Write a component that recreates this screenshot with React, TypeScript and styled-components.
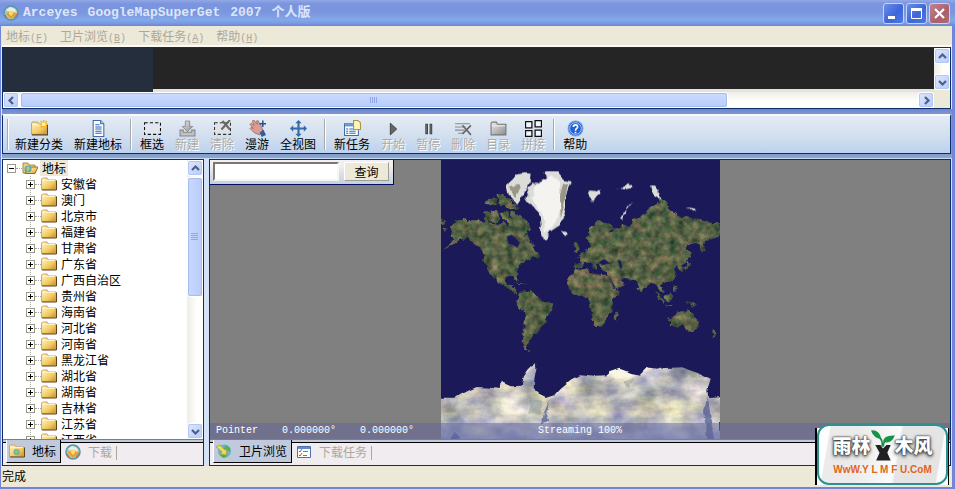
import React, { useState } from 'react';
import styled, { createGlobalStyle, css } from 'styled-components';

const GlobalStyle = createGlobalStyle`
  *, *::before, *::after { box-sizing: border-box; }
  body { margin: 0; overflow: hidden; }
  button, input { font: inherit; margin: 0; }
  svg { display: block; flex: none; }
`;

const NAVY = '#0b2f6c';
const BEIGE = '#ece9d8';
const MUTED = '#aca899';

/* ---------- window frame ---------- */

const Window = styled.div`
  display: flex;
  flex-direction: column;
  height: 100vh;
  background: #7385d8;
  font: 12px/16px 'Noto Sans CJK SC', sans-serif;
  color: #000;
`;

const TitleBar = styled.header`
  display: flex;
  align-items: center;
  flex: none;
  height: 26px;
  padding: 0 5px 0 3px;
  background: linear-gradient(#92a8e6 0, #7a94dd 4px, #7b95de 12px, #83a7e9 20px, #7b9ce4 23px, #6c84d0 26px);
`;

const Title = styled.h1`
  display: flex;
  flex: 1;
  gap: 10px;
  margin: 0 0 0 4px;
  color: #dbe6fb;
  font: bold 13px/20px 'Liberation Mono', 'Noto Sans CJK SC', monospace;
`;

const WindowButtons = styled.div`
  display: flex;
  gap: 2px;
`;

const WindowButton = styled.button<{ $danger?: boolean }>`
  display: grid;
  place-items: center;
  width: 21px;
  height: 21px;
  padding: 0;
  border: 1px solid #c3d3f6;
  border-radius: 3px;
  background: ${p => (p.$danger
    ? 'linear-gradient(135deg, #c08392, #a9616c 60%, #b06c70)'
    : 'linear-gradient(135deg, #6c8fe8, #3e66d8 55%, #4a7ae6)')};
`;

const Client = styled.div`
  display: flex;
  flex-direction: column;
  flex: 1;
  min-height: 0;
  margin: 0 3px 2px 1px;
  border-left: 1px solid #dce8fa;
  background: ${BEIGE};
`;

const MenuBar = styled.nav`
  display: flex;
  flex: none;
  gap: 12px;
  height: 21px;
  padding: 0 4px;
  border-bottom: 2px solid #fbfaf6;
`;

const MenuItem = styled.button`
  padding: 0;
  border: 0;
  background: none;
  color: ${MUTED};
  white-space: nowrap;
`;

const Shortcut = styled.span`
  font: 10px 'Liberation Mono', monospace;
`;

/* ---------- scroll bars ---------- */

const ScrollButton = styled.button`
  display: grid;
  place-items: center;
  flex: none;
  width: 16px;
  height: 16px;
  padding: 0;
  border: 1px solid #fff;
  border-radius: 3px;
  outline: 1px solid #b4c8f6;
  outline-offset: -2px;
  background: linear-gradient(135deg, #dce6ff, #b8cbfa);
`;

const VerticalBar = styled.div`
  display: flex;
  flex: none;
  flex-direction: column;
  justify-content: space-between;
  width: 16px;
  background: linear-gradient(90deg, #eeede8, #fefefb 60%);
`;

const HorizontalBar = styled.div`
  display: flex;
  flex: none;
  height: 16px;
  background: linear-gradient(#eeede8, #fefefb 60%);
`;

const Thumb = styled.div<{ $vertical?: boolean }>`
  display: flex;
  align-items: center;
  justify-content: center;
  border: 1px solid #fff;
  border-radius: 3px;
  outline: 1px solid #a6bcf0;
  outline-offset: -2px;
  ${p => (p.$vertical
    ? css`flex: 0 0 43%; margin: 1px 0 auto; background: linear-gradient(90deg, #c9d8ff, #b9cbf9);`
    : css`flex: 0 0 76%; margin: 0 auto 0 1px; background: linear-gradient(#cbdaff, #b9cdfb);`)}
`;

const BarSpace = styled.span`
  height: 10px;
`;

/* ---------- banner strip ---------- */

const Banner = styled.section`
  display: flex;
  flex: none;
  height: 62px;
  margin-right: 1px;
  border: 1px solid ${NAVY};
  background: ${BEIGE};
`;

const BannerMain = styled.div`
  display: flex;
  flex: 1;
  flex-direction: column;
  min-width: 0;
`;

const BannerCanvas = styled.div`
  display: flex;
  flex: 1;
  border-bottom: 3px solid #e3e2e0;
  background: #252525;
`;

const BannerBlock = styled.div`
  width: 150px;
  margin-bottom: -3px;
  background: #242e3c;
`;

/* ---------- tool bar ---------- */

const ToolArea = styled.div`
  flex: none;
  padding: 5px 1px 4px 0;
  background: linear-gradient(#6b83d4, #8398cc 5px, #7f98c8 44px, #90a8d0);
`;

const ToolBar = styled.div`
  display: flex;
  align-items: center;
  gap: 1px;
  height: 40px;
  padding: 0 4px;
  border: 1px solid ${NAVY};
  border-top: 2px solid #f5f8fc;
  background: linear-gradient(#e4ebf4, #d4e0ef 50%, #bdd2ee);
`;

const Divider = styled.span`
  width: 2px;
  height: 31px;
  margin: 0 2px;
  border-left: 1px solid #a7aaa8;
  border-right: 1px solid #fff;
`;

const Grip = styled(Divider)`
  margin: 0;
`;

const ToolButton = styled.button`
  display: flex;
  flex-direction: column;
  align-items: center;
  padding: 0 5px;
  border: 0;
  background: none;
  color: #000;
  line-height: 13px;
  white-space: nowrap;
  &:disabled {
    color: #aeaca4;
    text-shadow: 1px 1px #fff;
  }
`;

/* ---------- work area ---------- */

const WorkArea = styled.main`
  display: flex;
  flex: 1;
  gap: 5px;
  min-height: 0;
  padding-right: 1px;
  border-top: 1px solid #c6dbf6;
  background: #d4e2f7;
`;

const Pane = styled.section<{ $side?: boolean }>`
  display: flex;
  flex-direction: column;
  min-width: 0;
  border: 1px solid ${NAVY};
  background: #f0ecf0;
  ${p => (p.$side ? css`flex: 0 0 202px;` : css`flex: 1;`)}
`;

const TreeArea = styled.div`
  display: flex;
  flex: 1;
  min-height: 0;
  background: #fff;
`;

const Tree = styled.ul`
  flex: 1;
  margin: 0;
  padding: 0 0 0 4px;
  overflow: hidden;
  list-style: none;
`;

const Branch = styled.ul`
  margin: 0 0 0 19px;
  padding: 0;
  list-style: none;
  background: repeating-linear-gradient(#aaa89c 0 1px, transparent 1px 2px) 4px 0 / 1px 100% no-repeat;
`;

const TreeRow = styled.div`
  display: flex;
  align-items: center;
  height: 16px;
`;

const Expander = styled.button`
  display: grid;
  place-items: center;
  width: 9px;
  height: 9px;
  padding: 0;
  border: 1px solid #9b998c;
  background: #fff;
`;

const Dots = styled.span`
  width: 6px;
  border-top: 1px dotted #a7a59a;
`;

const NodeLabel = styled.span<{ $selected?: boolean }>`
  margin-left: 2px;
  padding: 0 2px;
  background: ${p => (p.$selected ? BEIGE : 'transparent')};
`;

/* ---------- tabs ---------- */

const Tabs = styled.div`
  display: flex;
  flex: none;
  align-items: flex-start;
  height: 26px;
  padding-left: 3px;
  border-top: 1px solid #7d7f82;
  background: linear-gradient(#bfcadd 2px, #000 2px 3px, #f0ecf0 3px);
`;

const Tab = styled.button<{ $active?: boolean }>`
  display: flex;
  align-items: center;
  gap: 7px;
  height: 23px;
  padding: 0 4px;
  border: 0;
  background: none;
  color: ${MUTED};
  white-space: nowrap;
  ${p => p.$active && css`
    padding: 0 4px 0 2px;
    border: solid;
    border-width: 0 1px 1px;
    border-color: #000 #000 #000 #fff;
    background: #c0cadc;
    color: #000;
  `}
`;

const TabEnd = styled.span`
  height: 14px;
  margin-top: 6px;
  border-left: 1px solid ${MUTED};
`;

/* ---------- map view ---------- */

const MapView = styled.div`
  position: relative;
  display: flex;
  flex: 1;
  justify-content: center;
  min-height: 0;
  background: #808080;
`;

const SearchPanel = styled.form`
  position: absolute;
  top: 0;
  left: 0;
  display: flex;
  gap: 5px;
  padding: 2px 4px 3px 3px;
  border: solid #000e62;
  border-width: 0 1px 1px 0;
  background: linear-gradient(#f2eef2 0 6px, #e0e2ec 12px, #c6d0e2);
`;

const SearchInput = styled.input`
  width: 126px;
  height: 19px;
  padding: 0 3px;
  border: 2px solid;
  border-color: #79776f #f6f5ee #f6f5ee #79776f;
  background: #fff;
`;

const SearchButton = styled.button`
  width: 45px;
  height: 19px;
  padding: 0;
  border: 1px solid;
  border-color: #fff #a09e92 #a09e92 #fff;
  background: ${BEIGE};
  line-height: 16px;
`;

const MapStatus = styled.div`
  position: absolute;
  right: 0;
  bottom: 0;
  left: 0;
  display: grid;
  grid-template-columns: 1fr auto 1fr;
  height: 16px;
  padding: 0 6px;
  background: rgba(98, 98, 156, 0.5);
  color: #fff;
  font: 10px/16px 'Liberation Mono', monospace;
`;

const Readout = styled.div`
  display: flex;
  gap: 24px;
`;

const StatusBar = styled.footer`
  flex: none;
  height: 21px;
  padding: 2px 0;
  background: ${BEIGE};
`;

/* ---------- site badge ---------- */

const Badge = styled.aside`
  position: absolute;
  right: 7px;
  bottom: 4px;
  width: 131px;
  height: 61px;
  overflow: hidden;
  border: 2px solid #2c9090;
  border-radius: 12px;
  background: linear-gradient(100deg, #fff 8%, #ebebeb 9% 30%, #fbfbfb 60%, #e4e4e4 62% 92%, #fbfbfb 93%);
`;

const BadgeBacking = styled.div`
  position: absolute;
  right: 6px;
  bottom: 4px;
  width: 134px;
  height: 57px;
  border: solid #000;
  border-width: 0 1px 0 2px;
  background: #fff;
`;

const BadgeName = styled.div`
  display: flex;
  align-items: center;
  justify-content: center;
  height: 38px;
  color: #fff;
  font: 900 19px/38px 'Noto Sans CJK SC', sans-serif;
  text-shadow: 0 0 1px #333, 0 0 2px #333, 0 1px 3px #444, 0 2px 4px #777;
`;

const BadgeUrl = styled.a`
  display: block;
  color: #e0651c;
  font: bold 10px/12px 'Liberation Sans', sans-serif;
  text-align: center;
  text-decoration: none;
  white-space: pre;
`;

/* ---------- icons ---------- */

type IconName = 'folderNew' | 'page' | 'select' | 'import' | 'clear' | 'pan' | 'extent' | 'task'
  | 'play' | 'pause' | 'remove' | 'folderGray' | 'stitch' | 'help' | 'folder' | 'folderOpen'
  | 'folderEarth' | 'earth' | 'globe' | 'list';

const folderShape = (
  <>
    <path d="M.5 13.500V3l1-1H6l1.500 2H15v9.500z" fill="url(#gold)" stroke="#c9a868" />
    <path d="M1 4.500h13" stroke="#fff3c4" />
    <path d="M1 14h14.500V4.500" fill="none" stroke="#5c451c" />
  </>
);

const drawings: Record<IconName, React.ReactNode> = {
  folder: folderShape,
  folderNew: (
    <>
      {folderShape}
      <path d="M12 0v8M8 4h8M9 1l6 6M15 1L9 7" stroke="#f5b51d" strokeWidth="1.400" />
      <circle cx="12" cy="4" r="1.800" fill="#fff7a0" />
    </>
  ),
  folderEarth: (
    <>
      {folderShape}
      <circle cx="7.500" cy="9" r="3" fill="#5fa7b0" />
      <path d="M5 8l3-2 2 3-3 3z" fill="#8fc274" />
    </>
  ),
  folderOpen: (
    <>
      <path d="M1 13V3h5l1 2h6v8z" fill="#e8cf8b" stroke="#a98a4a" />
      <path d="M3 13.500L5 7h11l-3 6.500z" fill="url(#gold)" stroke="#8e6e2c" />
      <circle cx="6" cy="9" r="3.500" fill="#5fa7b0" />
      <path d="M4 8l2-2 2 2-2 4z" fill="#a7cf74" />
    </>
  ),
  folderGray: (
    <>
      <path d="M1 14V3l1-1h4l1 2h8v10z" fill="url(#silver)" stroke="#777" />
      <path d="M2 5.500h12" stroke="#eee" />
    </>
  ),
  page: (
    <>
      <path d="M3 .5h7l3 3v12H3z" fill="#fff" stroke="#426aa8" />
      <path d="M10 .5v3h3" fill="#b8d0f2" stroke="#426aa8" />
      <path d="M5 4.500h4M5 6.500h6M5 8.500h6M5 10.500h6M5 12.500h6" stroke="#2462b8" />
    </>
  ),
  select: <path d="M.5 2.500h15v11H.5z" fill="#e1e7ee" stroke="#111" strokeDasharray="3 2" />,
  import: (
    <>
      <path d="M1 9.500h3v2h8v-2h3V15H1z" fill="#c2c2c2" stroke="#858585" />
      <path d="M6 1h4v5h3l-5 5-5-5h3z" fill="url(#silver)" stroke="#858585" strokeWidth=".8" />
    </>
  ),
  clear: (
    <>
      <path d="M.5 2.500h15v11H.5z" fill="#dfe3e8" stroke="#333" strokeDasharray="3 2" />
      <path d="M8 1l7 8M15 0L7 9" stroke="#6a6a6a" strokeWidth="2" />
    </>
  ),
  pan: (
    <>
      <path d="M1 4l1-1 3 2-2-4 1.500-1L8 4 7 1l1.500-.5L12 7l1 3-3 4-5-2-4-4 1-1 2 1z" fill="#dc9c92" stroke="#9f6963" strokeWidth=".8" />
      <path d="M10 12l3.500-3 2.500 5-4 2z" fill="#335e9d" />
      <path d="M13 .5v6M10 3.500h6" stroke="#214f94" strokeWidth="1.400" />
    </>
  ),
  extent: (
    <path d="M8 0l3 3H9v4h4V5l3 3-3 3V9H9v4h2l-3 3-3-3h2V9H3v2L0 8l3-3v2h4V3H5z" fill="#3569a7" />
  ),
  task: (
    <>
      <path d="M.5 3.500h13v11H.5z" fill="#fff" stroke="#3f6da5" />
      <path d="M1 5h12" stroke="#5c90d0" strokeWidth="2" />
      <path d="M2 8.500h2M5 8.500h6M2 10.500h2M5 10.500h6M2 12.500h2M5 12.500h6" stroke="#316abb" />
      <path d="M9 .5h4l2.500 2V9H9z" fill="#fff5b5" stroke="#aa954a" />
    </>
  ),
  play: <path d="M5 3v11l6-5.500z" fill="#666" stroke="#333" strokeWidth=".8" />,
  pause: <path d="M5.500 4v9H7V4zM9.500 4v9H11V4z" fill="#888" stroke="#444" />,
  remove: (
    <>
      <path d="M0 3.500h14M0 6.500h10M0 9.500h9M3 12.500h5" stroke="#8b8b8b" />
      <path d="M7 5l8 9M15 5l-8 8" stroke="#666" strokeWidth="1.500" />
    </>
  ),
  stitch: (
    <path d="M.5 1.500h6v6h-6zM9.500.5h6v6h-6zM.5 10h6v5.500h-6zM9.500 9.500h6v6h-6z" fill="#f3f6fa" stroke="#111" strokeWidth="1.200" />
  ),
  help: (
    <>
      <circle cx="8" cy="8" r="7" fill="#2561cf" stroke="#7ba3e5" />
      <circle cx="8" cy="8" r="5.500" fill="none" stroke="#d5e4ff" strokeWidth=".7" />
      <path d="M6 6.500C6 4 10 4 10 6.500 10 8 8 8 8 10M8 11v1.500" fill="none" stroke="#fff" strokeWidth="1.500" />
    </>
  ),
  globe: (
    <>
      <circle cx="8" cy="8" r="7" fill="#a4cfa4" stroke="#5b93b0" strokeWidth="1.500" />
      <path d="M3 5l4-3 5 2 1 3-5 1z" fill="#e6efe6" />
      <path d="M2.500 8h3V6.500h5V8h3L8 14z" fill="#f09a22" />
      <path d="M6 6.500h4V9L8 11 6 9z" fill="#ffd96b" />
      <path d="M11 13l3-4M2 10l2 3" stroke="#d84f22" />
    </>
  ),
  earth: (
    <>
      <circle cx="8.500" cy="8" r="7" fill="#6bb0cc" stroke="#b5d3d6" />
      <path d="M9 2l5 3v4l-3-2-3 1zM5 9l5 1 1 4-4 1-3-3z" fill="#5dab4d" />
      <path d="M0 4l4-2 5 5 2-1-1 6-6-1 2-2z" fill="#e9d85e" stroke="#9c9c39" strokeWidth=".7" />
    </>
  ),
  list: (
    <>
      <path d="M1.500 2.500h13v11h-13z" fill="#fff" stroke="#4d72ab" />
      <path d="M2 4h12" stroke="#5e8fd6" strokeWidth="2" />
      <path d="M3 7l1 1 2-3M3 11l1 1 2-3" fill="none" stroke="#c64b34" />
      <path d="M7 7.500h5M7 11.500h4" stroke="#5d7fae" />
    </>
  ),
};

const Icon = ({ name, size = 16 }: { name: IconName; size?: number }) => (
  <svg width={size} height={size} viewBox="0 0 16 16" aria-hidden="true">{drawings[name]}</svg>
);

const Gradients = () => (
  <svg width="0" height="0" aria-hidden="true">
    <defs>
      <linearGradient id="gold" x1="0" y1="0" x2="1" y2="1">
        <stop offset="0" stopColor="#fff6c5" /><stop offset=".6" stopColor="#f3ca62" /><stop offset="1" stopColor="#c98b25" />
      </linearGradient>
      <linearGradient id="silver" x1="0" y1="0" x2="1" y2="1">
        <stop offset="0" stopColor="#ececec" /><stop offset="1" stopColor="#8b8b8b" />
      </linearGradient>
    </defs>
  </svg>
);

const arrows = { up: 'M1 6l3.500-3.500L8 6', down: 'M1 3l3.500 3.500L8 3', left: 'M6 1L2.500 4.500 6 8', right: 'M3 1l3.500 3.500L3 8' };

const Arrow = ({ to }: { to: keyof typeof arrows }) => (
  <ScrollButton type="button" aria-label={to}>
    <svg width="9" height="9" viewBox="0 0 9 9"><path d={arrows[to]} fill="none" stroke="#4d6185" strokeWidth="2.200" /></svg>
  </ScrollButton>
);

const ThumbGrip = ({ vertical }: { vertical?: boolean }) => (
  <svg width="8" height="8" viewBox="0 0 8 8">
    <path d={vertical ? 'M0 .5h7M0 2.500h7M0 4.500h7M0 6.500h7' : 'M.5 1v6M2.500 1v6M4.500 1v6M6.500 1v6'} stroke="#8fa9e8" />
  </svg>
);

/* ---------- world map ---------- */

const land = [
  'M30 208L50 187 70 185 90 190 132 190 150 196 175 200 190 193 205 203 212 160 225 165 245 175 262 190 275 215 262 218 255 235 265 240 275 255 285 270 298 290 290 300 275 295 265 308 250 312 240 325 227 338 230 352 236 370 230 370 220 355 205 353 196 360 196 372 203 382 214 380 220 373 218 388 230 393 234 404 225 402 200 390 182 380 170 362 158 348 165 365 150 345 138 328 130 310 132 290 120 270 100 250 80 240 62 245 45 258 20 270 5 277 28 262 42 248 32 235 38 222z',
  'M132 160L155 158 178 160 180 180 170 196 150 190 135 190zM135 135L148 122 165 120 168 140 150 145zM170 115L185 105 200 118 218 130 236 150 215 155 200 140 178 142zM182 165L200 160 210 190 190 190zM215 165L240 170 258 190 274 215 262 215 240 200 225 190z',
  'M238 402L262 399 275 405 290 410 300 425 320 431 338 440 336 455 325 470 318 490 302 505 292 520 280 530 272 545 262 560 262 572 268 580 255 578 247 562 250 535 255 510 258 480 250 462 238 447 232 430 238 415z',
  'M437 240L445 225 458 205 470 192 485 187 498 193 515 200 520 210 505 220 515 225 520 208 535 208 552 200 570 203 578 195 580 178 590 175 600 180 615 165 628 150 650 138 658 125 680 135 685 155 705 160 720 175 755 180 790 185 815 195 838 195 838 238 815 242 795 250 790 265 795 278 785 280 778 260 765 255 745 260 738 275 755 282 750 300 738 315 725 322 728 335 720 335 712 322 700 330 708 350 700 365 680 375 668 375 665 385 673 398 665 405 655 390 645 380 635 372 625 378 612 395 606 408 598 395 590 375 575 365 555 363 540 358 550 370 555 375 530 395 520 392 508 365 504 350 505 340 485 335 478 325 475 315 468 318 472 335 462 330 448 315 435 315 425 330 405 332 400 325 403 312 420 312 420 300 412 294 430 285 440 278 450 268 447 258z',
  'M403 255L412 258 422 280 410 286 400 285 405 275zM465 250L478 218 490 215 485 238 475 255z',
  'M408 337L445 332 452 345 475 350 500 350 512 380 522 395 538 398 530 415 518 430 514 445 515 458 505 475 498 492 485 505 468 508 460 490 452 470 452 450 445 435 445 418 430 410 410 412 395 408 383 393 381 375 390 355z',
  'M535 458L536 470 528 487 521 484 523 468z',
  'M685 480L700 473 713 462 728 458 735 465 742 452 750 460 758 465 765 478 776 490 775 505 765 520 755 522 740 512 725 502 705 508 690 508 690 495z',
  'M645 402L655 410 675 430 670 434 655 422zM676 415L692 403 695 412 690 430 680 428zM735 430L750 432 768 446 750 444zM700 376L708 385 710 400 703 396zM672 436L700 442 698 446 673 440zM745 305L750 318 740 330 725 336 740 322zM222 375L245 378 262 381 242 375zM820 515L832 520 818 542 810 543 822 530zM3 185L15 190 12 202 3 195zM8 210L20 215 12 222z',
];

const ice = [
  'M278 68L300 72 315 60 310 48 330 40 355 40 368 55 372 70 392 72 385 95 378 120 378 150 370 185 358 200 335 215 325 230 318 245 308 238 303 215 300 185 295 165 280 145 265 135 256 122 262 105 268 85z',
  'M198 90L210 68 232 50 255 45 275 52 272 68 262 82 262 95 250 108 242 130 228 140 215 120 203 110z',
  'M445 98L462 102 478 92 482 105 470 122 460 132 452 118zM366 218L384 218 386 226 375 231zM528 88L548 90 565 78 572 90 555 95zM580 137L560 148 552 165 550 185 543 180 548 160 562 142zM633 82L645 88 660 110 665 122 655 118 640 108zM740 145L770 152 755 155z',
];

const antarctica = 'M0 722L40 722 60 708 85 695 110 684 150 686 182 690 185 668 215 682 245 680 252 655 265 635 285 615 286 635 280 665 278 690 300 710 320 720 345 712 365 690 395 665 420 652 460 656 500 655 515 642 545 632 580 645 600 650 620 630 650 635 675 630 720 628 770 645 790 655 812 665 802 700 805 720 840 718 840 850 0 850z';

const WorldMap = () => (
  <svg width="279" height="279" viewBox="3 6 837 837" role="img" aria-label="World map">
    <defs>
      <filter id="terrain" x="0" y="0" width="100%" height="100%" colorInterpolationFilters="sRGB">
        <feTurbulence type="fractalNoise" baseFrequency=".045" numOctaves="5" seed="8" result="n" />
        <feDisplacementMap in="SourceGraphic" in2="n" scale="20" xChannelSelector="R" yChannelSelector="G" result="shape" />
        <feColorMatrix in="n" values=".9 .2 0 0 -.18  .5 .4 0 0 -.06  .4 .2 .1 0 -.08  0 0 0 0 1" result="color" />
        <feComposite in="color" in2="shape" operator="in" result="textured" />
        <feComposite in="textured" in2="shape" operator="arithmetic" k2=".6" k3=".4" />
      </filter>
      <filter id="snow" x="0" y="0" width="100%" height="100%" colorInterpolationFilters="sRGB">
        <feTurbulence type="fractalNoise" baseFrequency=".03" numOctaves="4" seed="5" result="n" />
        <feDisplacementMap in="SourceGraphic" in2="n" scale="22" xChannelSelector="R" yChannelSelector="G" />
      </filter>
      <filter id="plateau" x="0" y="0" width="100%" height="100%" colorInterpolationFilters="sRGB">
        <feTurbulence type="fractalNoise" baseFrequency=".012 .018" numOctaves="5" seed="12" result="n" />
        <feDisplacementMap in="SourceGraphic" in2="n" scale="18" xChannelSelector="R" yChannelSelector="G" result="shape" />
        <feColorMatrix in="n" values="1.100 0 0 0 .18  1 .1 0 0 .17  .6 0 .4 0 .2  0 0 0 0 1" result="color" />
        <feComposite in="color" in2="shape" operator="in" result="textured" />
        <feComposite in="textured" in2="shape" operator="arithmetic" k2=".75" k3=".25" />
      </filter>
      <linearGradient id="shelf" x1="0" y1="0" x2="0" y2="1">
        <stop offset=".4" stopColor="#8ba2cc" stopOpacity="0" /><stop offset="1" stopColor="#8298cc" stopOpacity=".6" />
      </linearGradient>
    </defs>
    <rect width="850" height="850" fill="#1b1958" />
    <g filter="url(#terrain)">
      {land.map(d => <path key={d} d={d} fill="#4b6044" />)}
      <g fill="#917c60" opacity=".85">
        <path d="M388 355L410 340 450 343 505 355 520 388 490 390 440 388 385 388zM510 345L535 345 552 372 530 390 515 370z" />
        <path d="M560 310L610 300 690 295 700 315 650 330 600 328 545 325z" opacity=".7" />
        <path d="M140 310L165 310 185 350 180 372 150 340zM255 480L265 520 255 570 248 550zM455 470L490 475 485 500 465 500zM695 480L745 475 760 495 720 498z" opacity=".7" />
      </g>
    </g>
    <path d="M200 235L215 230 225 238 240 255 232 270 222 262 206 258zM475 313L492 303 512 316 488 321zM533 304L542 308 547 330 540 332zM505 354L527 388 521 390z" fill="#1b1958" />
    <g filter="url(#snow)">
      {ice.map(d => <path key={d} d={d} fill="#dcdcd8" />)}
      <path d="M285 82L330 55 360 70 360 150 345 195 318 225 308 165 272 120z" fill="#f4f3ef" />
      <path d="M370 80L385 78 372 145 362 180 360 110zM210 90L235 75 240 95 225 118zM280 68L300 75 290 80z" fill="#77705e" opacity=".65" />
    </g>
    <g filter="url(#plateau)"><path d={antarctica} fill="#dedad4" /></g>
    <path d="M0 735L300 715 350 725 800 720 840 725V850H0z" fill="url(#shelf)" />
    <g filter="url(#snow)">
      <path d="M803 715L812 780 822 850 798 850 800 800 792 760zM330 722L318 770 325 790 305 800 312 760zM45 820L65 840 30 848z" fill="#3c4a8c" opacity=".6" />
      <path d="M270 720L310 725 300 770 265 765zM550 670L590 660 570 690z" fill="#87949c" opacity=".5" />
    </g>
  </svg>
);

/* ---------- content ---------- */

type Tool = { label: string; icon: IconName; disabled?: boolean };

const toolGroups: Tool[][] = [
  [{ label: '新建分类', icon: 'folderNew' }, { label: '新建地标', icon: 'page' }],
  [
    { label: '框选', icon: 'select' },
    { label: '新建', icon: 'import', disabled: true },
    { label: '清除', icon: 'clear', disabled: true },
    { label: '漫游', icon: 'pan' },
    { label: '全视图', icon: 'extent' },
  ],
  [
    { label: '新任务', icon: 'task' },
    { label: '开始', icon: 'play', disabled: true },
    { label: '暂停', icon: 'pause', disabled: true },
    { label: '删除', icon: 'remove', disabled: true },
    { label: '目录', icon: 'folderGray', disabled: true },
    { label: '拼接', icon: 'stitch', disabled: true },
  ],
  [{ label: '帮助', icon: 'help' }],
];

const menus = [['地标', 'F'], ['卫片浏览', 'B'], ['下载任务', 'A'], ['帮助', 'H']];

const provinces = ['安徽省', '澳门', '北京市', '福建省', '甘肃省', '广东省', '广西自治区', '贵州省', '海南省',
  '河北省', '河南省', '黑龙江省', '湖北省', '湖南省', '吉林省', '江苏省', '江西省'];

const Sign = ({ plus }: { plus?: boolean }) => (
  <svg width="7" height="7" viewBox="0 0 7 7"><path d={plus ? 'M1 3.500h5M3.500 1v5' : 'M1 3.500h5'} stroke="#000" /></svg>
);

export default function App() {
  const [query, setQuery] = useState('');
  return (
    <Window>
      <GlobalStyle />
      <TitleBar>
        <Gradients />
        <Icon name="globe" />
        <Title><span>Arceyes</span><span>GoogleMapSuperGet</span><span>2007</span><span>个人版</span></Title>
        <WindowButtons>
          <WindowButton aria-label="Minimize"><svg width="15" height="15"><path d="M2 11.500h7" stroke="#fff" strokeWidth="3" /></svg></WindowButton>
          <WindowButton aria-label="Maximize"><svg width="15" height="15"><path d="M2.500 3v9.500h10V3M2 3.500h11" fill="none" stroke="#fff" /><path d="M2 3.500h11" stroke="#fff" strokeWidth="3" /></svg></WindowButton>
          <WindowButton $danger aria-label="Close"><svg width="15" height="15"><path d="M3 3l9 9M12 3l-9 9" stroke="#fff" strokeWidth="2.200" /></svg></WindowButton>
        </WindowButtons>
      </TitleBar>
      <Client>
        <MenuBar>
          {menus.map(([label, key]) => (
            <MenuItem key={key}>{label}<Shortcut>(<u>{key}</u>)</Shortcut></MenuItem>
          ))}
        </MenuBar>
        <Banner>
          <BannerMain>
            <BannerCanvas><BannerBlock /></BannerCanvas>
            <HorizontalBar><Arrow to="left" /><Thumb><ThumbGrip /></Thumb><Arrow to="right" /></HorizontalBar>
          </BannerMain>
          <div>
            <VerticalBar><Arrow to="up" /><BarSpace /><Arrow to="down" /></VerticalBar>
          </div>
        </Banner>
        <ToolArea>
          <ToolBar role="toolbar">
            <Grip />
            {toolGroups.map((group, index) => (
              <React.Fragment key={group[0].label}>
                {index > 0 && <Divider />}
                {group.map(tool => (
                  <ToolButton key={tool.label} disabled={tool.disabled}>
                    <Icon name={tool.icon} size={17} />
                    {tool.label}
                  </ToolButton>
                ))}
              </React.Fragment>
            ))}
          </ToolBar>
        </ToolArea>
        <WorkArea>
          <Pane $side>
            <TreeArea>
              <Tree>
                <li>
                  <TreeRow>
                    <Expander aria-label="收起"><Sign /></Expander><Dots />
                    <Icon name="folderOpen" />
                    <NodeLabel $selected>地标</NodeLabel>
                  </TreeRow>
                  <Branch>
                    {provinces.map(name => (
                      <li key={name}>
                        <TreeRow>
                          <Expander aria-label="展开"><Sign plus /></Expander><Dots />
                          <Icon name="folder" />
                          <NodeLabel>{name}</NodeLabel>
                        </TreeRow>
                      </li>
                    ))}
                  </Branch>
                </li>
              </Tree>
              <VerticalBar><Arrow to="up" /><Thumb $vertical><ThumbGrip vertical /></Thumb><Arrow to="down" /></VerticalBar>
            </TreeArea>
            <Tabs>
              <Tab $active><Icon name="folderEarth" />地标</Tab>
              <Tab><Icon name="globe" />下载</Tab>
              <TabEnd />
            </Tabs>
          </Pane>
          <Pane>
            <MapView>
              <WorldMap />
              <SearchPanel onSubmit={event => event.preventDefault()}>
                <SearchInput aria-label="查询" value={query} onChange={event => setQuery(event.target.value)} />
                <SearchButton type="submit">查询</SearchButton>
              </SearchPanel>
              <MapStatus>
                <Readout><span>Pointer</span><span>0.000000°</span><span>0.000000°</span></Readout>
                <span>Streaming 100%</span>
              </MapStatus>
            </MapView>
            <Tabs>
              <Tab $active><Icon name="earth" />卫片浏览</Tab>
              <Tab><Icon name="list" />下载任务</Tab>
              <TabEnd />
            </Tabs>
          </Pane>
        </WorkArea>
        <StatusBar>完成</StatusBar>
      </Client>
      <BadgeBacking />
      <Badge>
        <BadgeName>
          <span>雨林</span>
          <svg width="24" height="38" viewBox="0 0 28 38">
            <path d="M5 19h6l3 4 4-4h5l-4 9 4 9H6l4-9z" fill="#222" />
            <path d="M13 21Q14 14 10 10M14 21Q15 14 19 11" fill="none" stroke="#188a49" strokeWidth="2" />
            <path d="M0 2Q10 1 12 12 3 11 0 2zM14 15Q15 7 28 8 23 19 14 15z" fill="#169447" />
          </svg>
          <span>木风</span>
        </BadgeName>
        <BadgeUrl href="#ylmfu">WwW.Y L M F U.CoM</BadgeUrl>
      </Badge>
    </Window>
  );
}
